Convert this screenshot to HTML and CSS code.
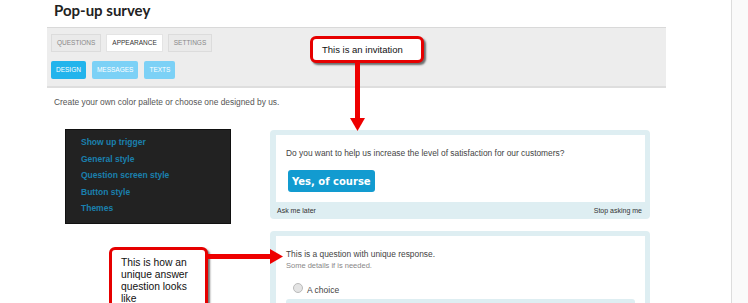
FILE: index.html
```html
<!DOCTYPE html>
<html lang="en">
<head>
  <meta charset="UTF-8" />
  <title>Pop-up survey</title>
  <link rel="stylesheet" href="styles.css">
</head>
<body>
  <div class="page">
    <div class="content">
      <h1>Pop-up survey</h1>

      <div class="toolbar">
        <div class="tabs">
          <span class="tab">Questions</span>
          <span class="tab active">Appearance</span>
          <span class="tab">Settings</span>
        </div>
        <div class="subtabs">
          <span class="subtab active">Design</span>
          <span class="subtab">Messages</span>
          <span class="subtab">Texts</span>
        </div>
      </div>

      <p class="intro">Create your own color pallete or choose one designed by us.</p>

      <div class="editor">
        <ul class="menu">
          <li>Show up trigger</li>
          <li>General style</li>
          <li>Question screen style</li>
          <li>Button style</li>
          <li>Themes</li>
        </ul>

        <div class="previews">
          <div class="card">
            <div class="card-body">
              <p class="question">Do you want to help us increase the level of satisfaction for our customers?</p>
              <button class="yes">Yes, of course</button>
            </div>
            <div class="card-foot">
              <span>Ask me later</span>
              <span>Stop asking me</span>
            </div>
          </div>

          <div class="card">
            <div class="card-body">
              <p class="question">This is a question with unique response.</p>
              <p class="details">Some details if is needed.</p>
              <label class="choice"><span class="radio"></span> A choice</label>
              <div class="choice-row"></div>
            </div>
          </div>
        </div>
      </div>

      <!-- annotations drawn over the screenshot -->
      <div class="note note-invite">This is an invitation</div>
      <svg class="arrow arrow-down" width="16" height="70" viewBox="0 0 16 70">
        <rect x="5" y="0" width="5" height="58" fill="#e00" />
        <polygon points="0,56 15,56 7.5,69" fill="#e00" />
      </svg>

      <div class="note note-question">This is how an unique answer question looks like</div>
      <svg class="arrow arrow-right" width="78" height="16" viewBox="0 0 78 16">
        <rect x="0" y="5" width="66" height="5" fill="#e00" />
        <polygon points="64,0 64,15 77,7.5" fill="#e00" />
      </svg>
    </div>
    <div class="gutter"></div>
  </div>
</body>
</html>
```

FILE: styles.css
```css
body {
  margin: 0;
  font-family: 'Liberation Sans', Arial, sans-serif;
  color: #444;
  background: #fff;
}

.page {
  display: flex;
  height: 303px;
  overflow: hidden;
}

.content {
  position: relative;
  width: 731px;
  flex-shrink: 0;
}

.gutter {
  flex: 1;
  border-left: 1px solid #ddd;
  background: #fafafa;
}

h1 {
  margin: 0;
  padding: 0 0 0 54px;
  height: 25px;
  box-sizing: border-box;
  font-family: 'Lato', sans-serif;
  font-size: 15px;
  line-height: 20px;
  font-weight: bold;
  color: #222;
}

.toolbar {
  margin-left: 47px;
  width: 619px;
  background: #ededed;
  border-top: 1px solid #d9d9d9;
  border-bottom: 2px solid #dedede;
  padding: 6px 4px 7px;
  box-sizing: border-box;
  margin-top: 2px;
}

.tabs,
.subtabs {
  display: flex;
  gap: 5px;
}

.subtabs {
  gap: 6px;
  margin-top: 9px;
}

.tab {
  height: 18px;
  line-height: 16px;
  padding: 0 5px;
  box-sizing: border-box;
  border: 1px solid #dcdcdc;
  background: #eaeaea;
  font-size: 6.5px;
  text-transform: uppercase;
  color: #888;
}

.tab.active {
  background: #fff;
  color: #333;
  border-color: #e4e4e4;
}

.subtab {
  height: 18px;
  line-height: 18px;
  padding: 0 5px;
  border-radius: 2px;
  background: #7cd1f6;
  color: #fff;
  font-size: 6.5px;
  text-transform: uppercase;
}

.subtab.active {
  background: #22b4ec;
}

.intro {
  margin: 9px 0 0 54px;
  font-size: 8.4px;
  line-height: 10px;
  color: #555;
}

.editor {
  display: flex;
  gap: 39px;
  margin-top: 22px;
  padding-left: 65px;
}

.menu {
  list-style: none;
  margin: 0;
  padding: 4px 0 4px 15px;
  width: 166px;
  height: 95px;
  box-sizing: border-box;
  background: #222;
  border: 1px solid #111;
}

.menu li {
  line-height: 16.5px;
  font-size: 8.5px;
  font-weight: 600;
  color: #1a80ae;
}

.previews {
  display: flex;
  flex-direction: column;
  gap: 12px;
  width: 380px;
  margin-top: 1px;
}

.card {
  background: #deeef2;
  border-radius: 4px;
  padding: 5px 5px 0 6px;
}

.card-body {
  background: #fff;
  padding: 13px 10px 10px;
}

.question {
  margin: 0;
  font-size: 8.4px;
  line-height: 10px;
  color: #444;
}

.yes {
  margin: 12px 0 0 2px;
  height: 22px;
  padding: 0 4px;
  border: none;
  border-radius: 3px;
  background: #129bd0;
  color: #fff;
  font-family: 'DejaVu Sans', sans-serif;
  font-size: 10px;
  font-weight: bold;
  display: block;
}

.card-foot {
  display: flex;
  justify-content: space-between;
  height: 17px;
  line-height: 17px;
  padding: 0 3px 0 1px;
  font-size: 7px;
  color: #333;
}

.details {
  margin: 2px 0 0;
  font-size: 7.5px;
  line-height: 9px;
  color: #888;
}

.choice {
  display: flex;
  align-items: center;
  gap: 4px;
  margin: 15px 0 0 7px;
  font-size: 8.5px;
  color: #444;
}

.radio {
  width: 8px;
  height: 8px;
  border-radius: 50%;
  border: 1px solid #bbb;
  background: #e4e4e4;
  margin-top: -5px;
}

.choice-row {
  margin-top: 4px;
  height: 14px;
  background: #deeef2;
  border-radius: 3px;
}

.note {
  position: absolute;
  background: #fff;
  border: 3px solid #e60000;
  border-radius: 6px;
  box-shadow: 2px 2px 2px rgba(0, 0, 0, 0.55);
  color: #111;
  box-sizing: border-box;
}

.note-invite {
  left: 310px;
  top: 36px;
  width: 114px;
  height: 27px;
  padding: 4px 0 0 9px;
  font-size: 9.5px;
  line-height: 14px;
}

.note-question {
  left: 109px;
  top: 247px;
  width: 99px;
  height: 80px;
  padding: 7px 6px 0 9px;
  font-size: 10.3px;
  line-height: 12px;
}

.arrow {
  position: absolute;
  overflow: visible;
}

.arrow-down {
  left: 350px;
  top: 62px;
}

.arrow-right {
  left: 206px;
  top: 249px;
}
```
